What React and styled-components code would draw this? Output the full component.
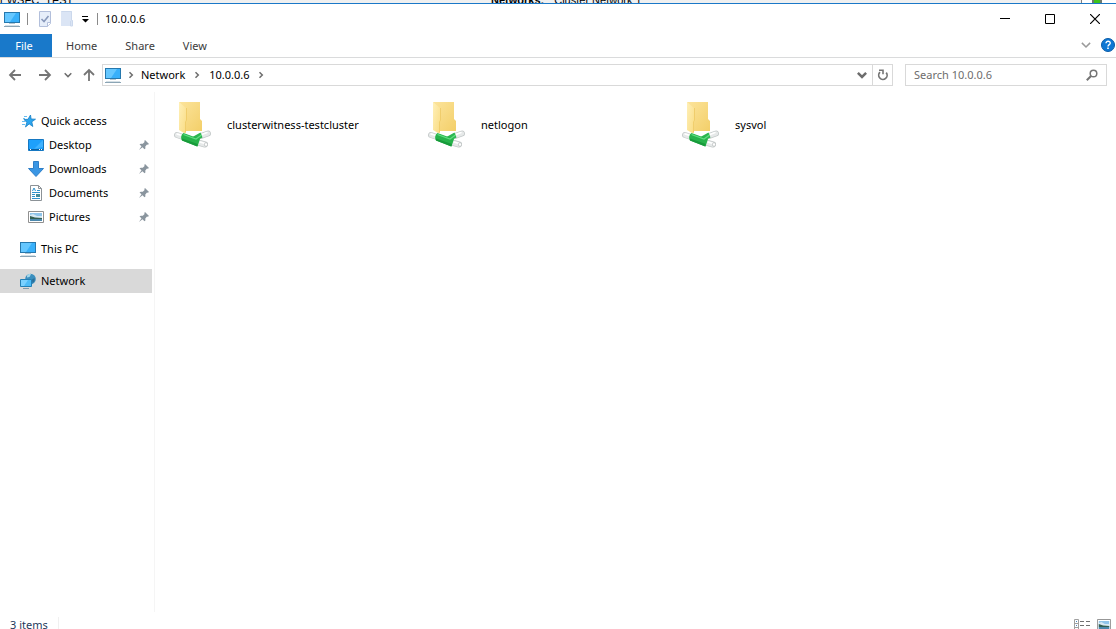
import React, { useState } from 'react'
import styled, { createGlobalStyle } from 'styled-components'

const GlobalStyle = createGlobalStyle`
  * { box-sizing: border-box; }
  html, body, #root { height: 100%; }
  body {
    margin: 0;
    background: #fff;
    color: #000;
    font: 11px/16px "Noto Sans", "Open Sans", sans-serif;
    overflow: hidden;
  }
  button, input { font: inherit; color: inherit; }
  svg { display: block; flex: none; }
`

const Page = styled.div`
  display: flex;
  flex-direction: column;
  height: 100vh;
`

const BackWindow = styled.div`
  display: flex;
  align-items: flex-end;
  height: 3px;
  flex: none;
  overflow: hidden;
  background: #f0f0f0;
  font: 11px/6px "Liberation Sans", sans-serif;
  white-space: pre;
`
const BackCell = styled.span`
  flex: ${p => p.$grow || '0 0 auto'};
  font-weight: ${p => (p.$bold ? 700 : 400)};
  padding-right: ${p => (p.$bold ? 10 : 0)}px;
`
const BackPane = styled.span`
  width: 35px;
  height: 3px;
  padding-left: 10px;
  border-left: 1px solid #808080;
  background: #fff;
`
const BackGlyph = styled.span`
  display: block;
  width: 10px;
  height: 3px;
  border: solid #6d7a6d;
  border-width: 0 2px;
  background: #3fc31a;
`

const Window = styled.div`
  display: flex;
  flex-direction: column;
  flex: 1;
  min-height: 0;
  border-top: 1px solid #1a78c8;
`

const TitleBar = styled.header`
  display: flex;
  align-items: center;
  height: 30px;
  flex: none;
  padding-left: 4px;
`
const Divider = styled.span`
  width: 1px;
  height: 12px;
  margin: 0 ${p => p.$right}px 0 ${p => p.$left}px;
  background: #8a8a8a;
`
const PlainButton = styled.button`
  display: flex;
  align-items: center;
  justify-content: center;
  flex: none;
  width: ${p => p.$width || 22}px;
  height: ${p => p.$height || 22}px;
  padding: 0;
  border: 0;
  background: none;
`
const Title = styled.h1`
  flex: 1;
  margin: 0;
  font-size: 11px;
  font-weight: 400;
`

const Ribbon = styled.nav`
  display: flex;
  height: 24px;
  flex: none;
  border-bottom: 1px solid #dadbdc;
`
const Tab = styled.button`
  padding: 0 14px;
  border: 0;
  background: none;
  color: #3b3b3b;
`
const FileTab = styled(Tab)`
  width: 52px;
  padding: 0 4px 0 0;
  background: #1979ca;
  color: #fff;
`
const Spacer = styled.span`
  flex: 1;
`

const AddressRow = styled.div`
  display: flex;
  align-items: center;
  height: 34px;
  flex: none;
  padding-right: 9px;
`
const AddressBar = styled.div`
  display: flex;
  align-items: center;
  flex: 1;
  height: 22px;
  padding-left: 2px;
  border: 1px solid #d9d9d9;
`
const Crumb = styled.a`
  color: #000;
  text-decoration: none;
`
const Refresh = styled(PlainButton)`
  border-left: 1px solid #d9d9d9;
`
const SearchBox = styled.label`
  display: flex;
  align-items: center;
  width: 202px;
  height: 22px;
  margin-left: 12px;
  padding: 0 8px;
  border: 1px solid #d9d9d9;
`
const SearchInput = styled.input`
  flex: 1;
  min-width: 0;
  padding: 0;
  border: 0;
  outline: 0;
  background: none;
  &::placeholder { color: #6d6d6d; opacity: 1; }
`

const Body = styled.div`
  display: flex;
  flex: 1;
  min-height: 0;
`
const Sidebar = styled.nav`
  width: 155px;
  flex: none;
  padding: 17px 2px 0 0;
  border-right: 1px solid #f5f5f5;
`
const Group = styled.div`
  margin-bottom: 8px;
`
const NavItem = styled.a`
  display: flex;
  align-items: center;
  gap: 5px;
  height: 24px;
  padding: 0 2px 0 ${p => (p.$nested ? 28 : 20)}px;
  background: ${p => (p.$active ? '#d9d9d9' : 'none')};
  color: #000;
  text-decoration: none;
`
const Label = styled.span`
  flex: 1;
`

const Files = styled.main`
  display: grid;
  grid-template-columns: repeat(auto-fill, 254px);
  align-content: start;
  flex: 1;
  padding: 6px 0 0 16px;
`
const FileItem = styled.button`
  display: flex;
  align-items: center;
  gap: 12px;
  height: 54px;
  padding: 0;
  border: 0;
  background: none;
  text-align: left;
`

const StatusBar = styled.footer`
  display: flex;
  align-items: center;
  height: 17px;
  flex: none;
  padding: 8px 1px 0 10px;
  color: #1e395b;
`
const Count = styled.span`
  padding-right: 10px;
  border-right: 1px solid #f0f0f0;
`

const MonitorIcon = () => (
  <svg width="16" height="16" viewBox="0 0 16 16">
    <path d="M0 1h16v11H0z" fill="#2678ad" />
    <path d="M1 2h14v9H1z" fill="#38b0fa" />
    <path d="M1 2h11L6 11H1z" fill="#65c7ff" />
    <path d="M5 12h6v1H5z" fill="#b3c7d3" />
    <path d="M0 15h16v1H0z" fill="#8ba5b5" />
    <path d="M1 14h14v1H1z" fill="#d5e0e6" />
  </svg>
)

const PropertiesIcon = () => (
  <svg width="14" height="18" viewBox="0 0 14 18">
    <path d="M1.500 1.500h11v12l-3 3h-8z" fill="#e6eefa" stroke="#b2bfdb" />
    <path d="M12.500 12.500h-3v4" fill="#fff" stroke="#b2bfdb" />
    <path d="M3.500 9l2.500 2.500L10.500 6" fill="none" stroke="#8798ba" strokeWidth="1.600" />
  </svg>
)

const NewFolderIcon = () => (
  <svg width="14" height="18" viewBox="0 0 14 18">
    <path d="M1 1h11v9h1v6H1z" fill="#dbe5f5" />
    <path d="M1.500 1.500h10v8.500l1 1v5h-2v-5" fill="none" stroke="#cbd8ec" />
  </svg>
)

const CustomizeIcon = () => (
  <svg width="8" height="8" viewBox="0 0 8 8">
    <path d="M1 1h6v1H1zM1 4h7L4.500 7.500z" fill="#000" />
  </svg>
)

const Chevron = ({ size = 8, color = '#6d6d6d', width = 1.5, down }) => (
  <svg width={size} height={size} viewBox="0 0 8 8">
    <path
      d={down ? 'M.7 2.300L4 5.600l3.300-3.300' : 'M2.500 1.200L5.300 4 2.500 6.800'}
      fill="none"
      stroke={color}
      strokeWidth={width}
    />
  </svg>
)

const ARROWS = {
  left: 'M13 7H2M7 2L2 7l5 5',
  right: 'M1 7h11M7 2l5 5-5 5',
  up: 'M7 13V2M2 7l5-5 5 5',
}
const Arrow = ({ to }) => (
  <svg width="14" height="14" viewBox="0 0 14 14">
    <path d={ARROWS[to]} fill="none" stroke="#757575" strokeWidth="1.800" />
  </svg>
)

const RefreshIcon = () => (
  <svg width="12" height="12" viewBox="0 0 12 12">
    <path d="M3 3.200A4.200 4.200 0 1 0 9.200 3.600" fill="none" stroke="#757575" strokeWidth="1.700" />
    <path d="M2 1.300h4v4" fill="none" stroke="#757575" strokeWidth="1.600" />
  </svg>
)

const SearchIcon = () => (
  <svg width="12" height="12" viewBox="0 0 12 12">
    <circle cx="7.500" cy="4.500" r="3.300" fill="none" stroke="#757575" strokeWidth="1.500" />
    <path d="M5 7L.8 11.200" stroke="#757575" strokeWidth="2" />
  </svg>
)

const HelpIcon = () => (
  <svg width="14" height="14" viewBox="0 0 14 14">
    <circle cx="7" cy="7" r="6.500" fill="#0f78d4" stroke="#0a5ca8" />
    <path d="M5 5.300C5 2.500 9.300 2.800 9.200 5.200 9.100 6.700 7 6.700 7 8.500" fill="none" stroke="#fff" strokeWidth="1.400" />
    <path d="M6.200 9.600h1.600v1.500H6.200z" fill="#fff" />
  </svg>
)

const StarIcon = () => (
  <svg width="16" height="16" viewBox="0 0 16 16">
    <path d="M10.500 2l.6 4 4.400.2-3.700 2.600 1 4.700-3.600-2.600L5.500 14l1.300-4.600L4 6.500l4-.2z" fill="#2ba5ef" stroke="#187fc4" strokeWidth=".8" />
    <path d="M4 3.500h3M3 5.500h2M2 8.500h3M2 11.500h3" stroke="#68bdf0" />
  </svg>
)

const DesktopIcon = () => (
  <svg width="16" height="16" viewBox="0 0 16 16">
    <path d="M.5 2.500h15v11H.5z" fill="#1ea0fb" stroke="#1678c2" />
    <path d="M15 3v7L6 12z" fill="#3fb2ff" />
    <path d="M1 12h14v1H1z" fill="#0d5e9c" />
    <path d="M2 12h1v1H2zM11 12h1v1h-1zM13 12h1v1h-1z" fill="#fff" />
  </svg>
)

const DownloadIcon = () => (
  <svg width="16" height="16" viewBox="0 0 16 16">
    <path d="M5.500.5h5v7h5L8 15.500.5 7.500h5z" fill="#3a96e4" stroke="#2f7fc8" />
  </svg>
)

const DocumentIcon = () => (
  <svg width="16" height="16" viewBox="0 0 16 16">
    <path d="M2.500.5h8l3 3v12h-11z" fill="#fff" stroke="#8c9297" />
    <path d="M10.500.5v3h3" fill="none" stroke="#8c9297" />
    <path d="M4.500 6L6 3l1.500 3M9 5.500h3M4 7.500h8M4 9.500h3M4 11.500h3M4 13.500h8" fill="none" stroke="#2f93cf" />
    <path d="M8 9h4v3H8z" fill="#458c9b" />
  </svg>
)

const PictureIcon = ({ width = 16 }) => (
  <svg width={width} height="16" viewBox="0 0 16 16" preserveAspectRatio="none">
    <path d="M.5 2.500h15v11H.5z" fill="#fff" stroke="#909090" />
    <path d="M2 4h12v8H2z" fill="#8fc4ea" />
    <path d="M2 6l3-1 4 2h5v2H2z" fill="#d7e9f4" />
    <path d="M2 7l5 1.500L14 9v1H2z" fill="#335f52" />
    <path d="M2 10h12v2H2z" fill="#4c88ad" />
  </svg>
)

const NetworkIcon = () => (
  <svg width="16" height="16" viewBox="0 0 16 16">
    <circle cx="10.500" cy="6" r="5.300" fill="#3b8fbe" />
    <path d="M7 2.500c1-1.500 3-1.800 4-1.300L9.500 4 7 4.500z" fill="#a5d6e9" />
    <path d="M12 6.500l2.500-1.500c.5 2 0 4-2 5z" fill="#2c6f99" />
    <path d="M.5 6.500h11v7H.5z" fill="#4dbcf7" stroke="#2380b5" />
    <path d="M1 7h7l-4 6H1z" fill="#79d1ff" />
    <path d="M3 15.500h6" stroke="#7e9cac" />
  </svg>
)

const PinIcon = () => (
  <svg width="12" height="12" viewBox="0 0 12 12">
    <path d="M7 1l4 4-1.200.8-.8-.3-1.700 2 .1 2L6.500 10.300 4.500 8.300 1 11l2.500-3.700-2-1.900L2.800 4.700l2 .1 1.800-1.700L6.300 2z" fill="#8a959e" />
  </svg>
)

const ShareIcon = () => (
  <svg width="44" height="54" viewBox="0 0 44 54">
    <defs>
      <linearGradient id="leaf" x1="0" y1="0" x2="1" y2="1">
        <stop offset="0" stopColor="#fff0b8" />
        <stop offset="1" stopColor="#f9dc84" />
      </linearGradient>
      <linearGradient id="back" x1="0" y1="0" x2="1" y2="1">
        <stop offset="0" stopColor="#fce49c" />
        <stop offset="1" stopColor="#f3cf69" />
      </linearGradient>
    </defs>
    <path d="M8 4h21v17l2 2v10H15z" fill="url(#back)" />
    <path d="M8 4l7 6v25H13l-5-3z" fill="url(#leaf)" />
    <path d="M15.500 10v12l-1 2v10" fill="none" stroke="#edc964" strokeWidth=".8" />
    <g fill="none" strokeLinecap="round">
      <path d="M6 37l6 2M37 35.500l-7 2.500M27 44.500l7 2" stroke="#c5caca" strokeWidth="6" />
      <path d="M6 37l6 2M37 35.500l-7 2.500M27 44.500l7 2" stroke="#e6e9e9" strokeWidth="4.500" />
      <path d="M6 36l5 1.500M36 34.500l-5 2M29 44l5 1.500" stroke="#fff" strokeWidth="1.500" />
    </g>
    <path d="M29.500 34.500l2 5-6 3-5-3z" fill="#2cb650" />
    <path d="M12.500 35l16.500 6-2.500 7.500L11 42.500c-1.500-2-1-6 1.500-7.500z" fill="#27b34b" />
    <path d="M11 40.500L26.800 46l-.6 2.500L11 42.500z" fill="#189b3b" />
    <path d="M12.500 36.500L25 41l5.500-4" fill="none" stroke="#60dd82" strokeWidth="1.200" />
    <ellipse cx="35" cy="46.500" rx="1.500" ry="2" fill="#fff" stroke="#b5baba" strokeWidth=".7" />
  </svg>
)

const DetailsIcon = () => (
  <svg width="16" height="12" viewBox="0 0 16 12">
    <path d="M.5.5h4v11h-4zM0 4.500h5M0 8.500h5" fill="none" stroke="#a0a0a0" />
    <path d="M6 2.500h4M12 2.500h4M6 6.500h4M12 6.500h4M6 10.500h4M12 10.500h4" stroke="#707070" />
    <path d="M2 2h1v1H2zM2 6h1v1H2z" fill="#4686bd" />
    <path d="M2 10h1v1H2z" fill="#c0392b" />
  </svg>
)

const quickLinks = [
  { name: 'Desktop', Icon: DesktopIcon },
  { name: 'Downloads', Icon: DownloadIcon },
  { name: 'Documents', Icon: DocumentIcon },
  { name: 'Pictures', Icon: PictureIcon },
]
const shares = ['clusterwitness-testcluster', 'netlogon', 'sysvol']

const App = () => {
  const [query, setQuery] = useState('')

  return <Page>
    <GlobalStyle />
    <BackWindow>
      <BackCell $grow="0 0 44%">r WSFC_TEST</BackCell>
      <BackCell $bold>Networks:</BackCell>
      <BackCell $grow="1">Cluster Network 1</BackCell>
      <BackPane><BackGlyph /></BackPane>
    </BackWindow>
    <Window>
      <TitleBar>
        <MonitorIcon />
        <Divider $left={7} $right={6} />
        <PlainButton aria-label="Properties"><PropertiesIcon /></PlainButton>
        <PlainButton aria-label="New folder"><NewFolderIcon /></PlainButton>
        <PlainButton $width={14} aria-label="Customize toolbar"><CustomizeIcon /></PlainButton>
        <Divider $left={5} $right={7} />
        <Title>10.0.0.6</Title>
        <PlainButton $width={42} aria-label="Minimize">
          <svg width="10" height="10"><path d="M0 4.500h10" stroke="#000" /></svg>
        </PlainButton>
        <PlainButton $width={48} aria-label="Maximize">
          <svg width="10" height="10"><path d="M.5.5h9v9h-9z" fill="none" stroke="#000" /></svg>
        </PlainButton>
        <PlainButton $width={42} aria-label="Close">
          <svg width="10" height="10"><path d="M0 0l10 10M10 0L0 10" stroke="#000" strokeWidth="1.200" /></svg>
        </PlainButton>
      </TitleBar>
      <Ribbon>
        <FileTab>File</FileTab>
        <Tab>Home</Tab>
        <Tab>Share</Tab>
        <Tab>View</Tab>
        <Spacer />
        <PlainButton $width={28} aria-label="Expand ribbon"><Chevron size={10} color="#9a9a9a" width={1.2} down /></PlainButton>
        <PlainButton $width={16} aria-label="Help"><HelpIcon /></PlainButton>
      </Ribbon>
      <AddressRow>
        <PlainButton $width={30} aria-label="Back"><Arrow to="left" /></PlainButton>
        <PlainButton $width={30} aria-label="Forward"><Arrow to="right" /></PlainButton>
        <PlainButton $width={16} aria-label="Recent"><Chevron down /></PlainButton>
        <PlainButton $width={26} aria-label="Up"><Arrow to="up" /></PlainButton>
        <AddressBar>
          <MonitorIcon />
          <PlainButton $width={20} $height={20} aria-label="Root"><Chevron /></PlainButton>
          <Crumb href="#network">Network</Crumb>
          <PlainButton $width={24} $height={20} aria-label="Network items"><Chevron /></PlainButton>
          <Crumb href="#host">10.0.0.6</Crumb>
          <PlainButton $width={22} $height={20} aria-label="Host items"><Chevron /></PlainButton>
          <Spacer />
          <PlainButton $width={20} $height={20} aria-label="Previous locations"><Chevron size={10} width={2} down /></PlainButton>
          <Refresh $width={20} $height={20} aria-label="Refresh"><RefreshIcon /></Refresh>
        </AddressBar>
        <SearchBox>
          <SearchInput aria-label="Search" placeholder="Search 10.0.0.6" value={query} onChange={e => setQuery(e.target.value)} />
          <SearchIcon />
        </SearchBox>
      </AddressRow>
      <Body>
        <Sidebar>
          <Group>
            <NavItem href="#quick"><StarIcon /><Label>Quick access</Label></NavItem>
            {quickLinks.map(({ name, Icon }) => (
              <NavItem key={name} href={`#${name}`} $nested>
                <Icon /><Label>{name}</Label><PinIcon />
              </NavItem>
            ))}
          </Group>
          <Group><NavItem href="#pc"><MonitorIcon /><Label>This PC</Label></NavItem></Group>
          <Group><NavItem href="#network" $active><NetworkIcon /><Label>Network</Label></NavItem></Group>
        </Sidebar>
        <Files>
          {shares.map(name => <FileItem key={name}><ShareIcon />{name}</FileItem>)}
        </Files>
      </Body>
      <StatusBar>
        <Count>3 items</Count>
        <Spacer />
        <PlainButton $height={12} aria-label="Details view"><DetailsIcon /></PlainButton>
        <PlainButton $height={12} aria-label="Large icons view"><PictureIcon width={14} /></PlainButton>
      </StatusBar>
    </Window>
  </Page>
}

export default App
